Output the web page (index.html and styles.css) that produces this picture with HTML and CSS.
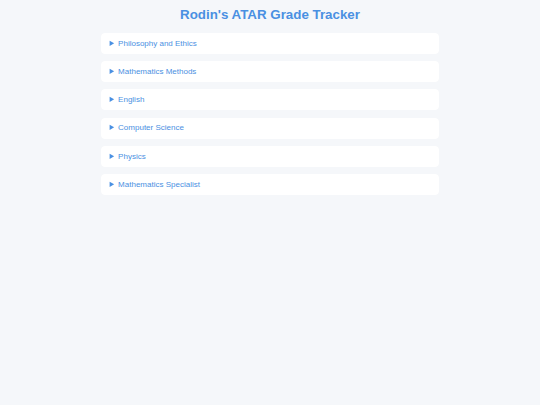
FILE: index.html
```html
<!DOCTYPE html>
<html lang="en">
<head>
<meta charset="utf-8">
<title>Rodin's ATAR Grade Tracker</title>
<link rel="stylesheet" href="styles.css">
</head>
<body>
<main class="page">
  <h1 class="title">Rodin's ATAR Grade Tracker</h1>
  <div class="subjects">
    <details class="subject"><summary class="subject-head">Philosophy and Ethics</summary></details>
    <details class="subject"><summary class="subject-head">Mathematics Methods</summary></details>
    <details class="subject"><summary class="subject-head">English</summary></details>
    <details class="subject"><summary class="subject-head">Computer Science</summary></details>
    <details class="subject"><summary class="subject-head">Physics</summary></details>
    <details class="subject"><summary class="subject-head">Mathematics Specialist</summary></details>
  </div>
</main>
</body>
</html>
```

FILE: styles.css
```css
html, body {
  margin: 0;
  padding: 0;
  background: #f5f7fa;
  font-family: "Liberation Sans", Arial, sans-serif;
}

.page {
  width: 337.3px;
  margin: 0 auto;
  padding-top: 7px;
}

.title {
  margin: 0 0 9.7px;
  font-size: 13.33px;
  line-height: 16px;
  font-weight: 700;
  text-align: center;
  color: #4a90e2;
}

.subjects {
  display: flex;
  flex-direction: column;
  gap: 7.3px;
}

.subject {
  background: #ffffff;
  border-radius: 4px;
  box-shadow: 0 0 1px rgba(0, 0, 0, 0.03);
}

.subject-head {
  padding: 5.9px 8.3px;
  font-size: 8px;
  line-height: 9.2px;
  color: #4a90e2;
  cursor: pointer;
}
```
